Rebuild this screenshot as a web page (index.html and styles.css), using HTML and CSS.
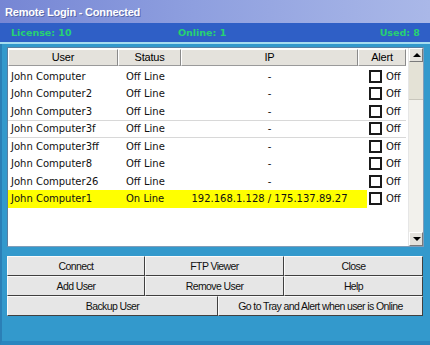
FILE: index.html
```html
<!DOCTYPE html>
<html lang="en">
<head>
    <meta charset="UTF-8">
    <meta name="viewport" content="width=device-width, initial-scale=1.0">
    <title>Remote Login</title>
    <link rel="stylesheet" href="styles.css">
</head>
<body>
    <div class="window">
        <div class="titlebar">Remote Login - Connected</div>
        <div class="statusbar">
            <span>License: 10</span>
            <span>Online: 1</span>
            <span class="used">Used: 8</span>
        </div>
        <div class="content">
            <div class="listview">
                <div class="list-main">
                    <div class="list-header">
                        <div>User</div>
                        <div>Status</div>
                        <div>IP</div>
                        <div>Alert</div>
                    </div>
                    <div class="list-body">
                        <div class="row"><div>John Computer</div><div>Off Line</div><div class="ip">-</div><div class="alert"><span class="check"></span>Off</div></div>
                        <div class="row"><div>John Computer2</div><div>Off Line</div><div class="ip">-</div><div class="alert"><span class="check"></span>Off</div></div>
                        <div class="row"><div>John Computer3</div><div>Off Line</div><div class="ip">-</div><div class="alert"><span class="check"></span>Off</div></div>
                        <div class="row focused"><div>John Computer3f</div><div>Off Line</div><div class="ip">-</div><div class="alert"><span class="check"></span>Off</div></div>
                        <div class="row"><div>John Computer3ff</div><div>Off Line</div><div class="ip">-</div><div class="alert"><span class="check"></span>Off</div></div>
                        <div class="row"><div>John Computer8</div><div>Off Line</div><div class="ip">-</div><div class="alert"><span class="check"></span>Off</div></div>
                        <div class="row"><div>John Computer26</div><div>Off Line</div><div class="ip">-</div><div class="alert"><span class="check"></span>Off</div></div>
                        <div class="row online"><div>John Computer1</div><div>On Line</div><div class="ip">192.168.1.128 / 175.137.89.27</div><div class="alert"><span class="check"></span>Off</div></div>
                    </div>
                </div>
                <div class="scrollbar">
                    <div class="arrow up"></div>
                    <div class="track"><div class="thumb"></div></div>
                    <div class="arrow down"></div>
                </div>
            </div>
            <div class="buttons">
                <button>Connect</button>
                <button>FTP Viewer</button>
                <button>Close</button>
                <button>Add User</button>
                <button>Remove User</button>
                <button>Help</button>
                <div class="button-row">
                    <button>Backup User</button>
                    <button>Go to Tray and Alert when user is Online</button>
                </div>
            </div>
        </div>
    </div>
</body>
</html>
```

FILE: styles.css
```css
body {
    margin: 0;
    padding: 0;
    width: 430px;
    height: 345px;
    overflow: hidden;
    background: #3399cc;
}
.window {
    width: 430px;
    height: 345px;
    display: flex;
    flex-direction: column;
    box-sizing: border-box;
    border-left: 2px solid #2b7fb6;
    border-bottom: 4px solid #2a86bf;
}
.titlebar {
    height: 23px;
    line-height: 25px;
    padding-left: 5px;
    margin-left: -2px;
    background: linear-gradient(to right, #7686d4, #8e9fdf 45%, #aab8e8);
    color: #fff;
    font-family: "Liberation Sans", Arial, sans-serif;
    font-weight: bold;
    font-size: 11px;
    letter-spacing: -0.2px;
    text-shadow: 1px 1px 0 #5a68a8;
}
.statusbar {
    height: 19px;
    margin-left: -2px;
    padding: 0 10px 0 11px;
    background: #2f5fc6;
    border-bottom: 2px solid #a6dcef;
    display: grid;
    grid-template-columns: 167px auto 1fr;
    align-items: center;
    font-family: "DejaVu Sans", Verdana, sans-serif;
    font-weight: bold;
    font-size: 9.5px;
    color: #27d272;
}
.used {
    text-align: right;
}
.content {
    flex: 1;
    padding: 3px 6px 0 5px;
}
.listview {
    height: 200px;
    display: flex;
    background: #fff;
    border: 1px solid #7f9db9;
    border-top-color: #5a7ea0;
    border-left-color: #5a7ea0;
    box-sizing: border-box;
}
.list-main {
    flex: 1;
    display: flex;
    flex-direction: column;
}
.list-header,
.row {
    display: grid;
    grid-template-columns: 110px 63px 177px 48px;
}
.list-header {
    height: 17px;
    margin-top: 1px;
}
.list-header div {
    background: #e4e2dc;
    border-right: 1px solid #8a8a8a;
    border-bottom: 1px solid #9a9a9a;
    border-top: 1px solid #fff;
    border-left: 1px solid #fff;
    text-align: center;
    font-family: "Liberation Sans", Arial, sans-serif;
    font-size: 11px;
    line-height: 15px;
    color: #000;
    letter-spacing: -0.2px;
}
.list-body {
    flex: 1;
    padding-top: 1.5px;
}
.row {
    height: 17.5px;
    box-sizing: border-box;
    font-family: "DejaVu Sans", Verdana, sans-serif;
    font-size: 10px;
    line-height: 17.5px;
    color: #111;
    white-space: nowrap;
}
.row div:first-child {
    padding-left: 3px;
}
.row div:nth-child(2) {
    padding-left: 8px;
}
.row .ip {
    text-align: center;
}
.row .alert {
    display: flex;
    align-items: center;
    padding-left: 11px;
}
.check {
    width: 9px;
    height: 9px;
    border: 2px solid #1a1a1a;
    margin-right: 4px;
    background: #fff;
}
.focused {
    border-top: 1px solid #d8d8d8;
    border-bottom: 1px solid #d8d8d8;
    line-height: 15.5px;
    margin-right: 2px;
}
.online div:nth-child(-n+3) {
    background: #ffff00;
}
.online .alert {
    background: linear-gradient(to right, #ffff00 9px, transparent 9px);
}
.scrollbar {
    width: 15px;
    display: flex;
    flex-direction: column;
    background: #f2f1ec;
    border-left: 1px solid #e6e6e6;
}
.arrow {
    height: 14px;
    background: #e4e2dc;
    border: 1px solid;
    border-color: #fff #7a7a7a #7a7a7a #fff;
    box-sizing: border-box;
    position: relative;
}
.arrow::after {
    content: "";
    position: absolute;
    left: 3px;
    top: 4px;
    border-left: 4px solid transparent;
    border-right: 4px solid transparent;
}
.arrow.up::after {
    border-bottom: 4px solid #000;
}
.arrow.down::after {
    border-top: 4px solid #000;
}
.track {
    flex: 1;
}
.thumb {
    height: 37px;
    background: #e4e2d6;
    border-bottom: 1px solid #c8c6bc;
}
.buttons {
    margin-top: 9px;
    margin-right: -2px;
    display: grid;
    grid-template-columns: 138px 139px 139px;
    grid-auto-rows: 20px;
}
.button-row {
    grid-column: 1 / 4;
    display: grid;
    grid-template-columns: 211px 205px;
}
button {
    margin: 0;
    padding: 0;
    background: #e6e6e6;
    border: 1px solid;
    border-color: #fafafa #404040 #404040 #fafafa;
    font-family: "Liberation Sans", Arial, sans-serif;
    font-size: 10.5px;
    letter-spacing: -0.6px;
    color: #111;
    cursor: pointer;
}
```
